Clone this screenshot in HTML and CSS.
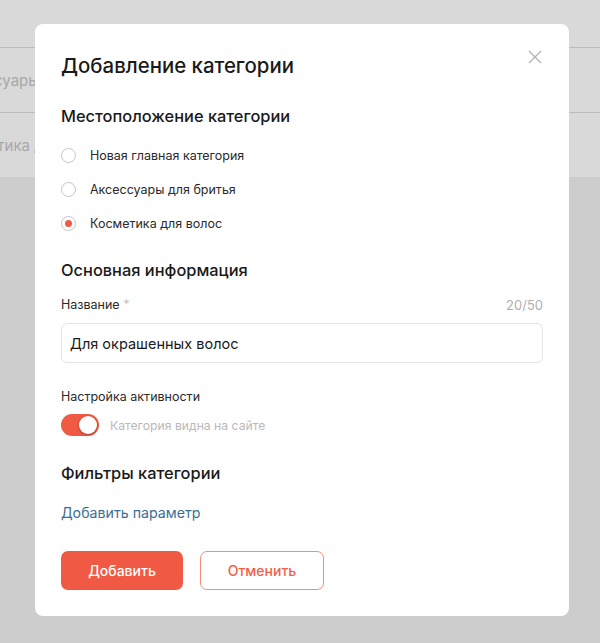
FILE: index.html
```html
<!DOCTYPE html>
<html lang="ru">
<head>
    <meta charset="UTF-8">
    <meta name="viewport" content="width=device-width, initial-scale=1.0">
    <title>Добавление категории</title>
    <link rel="stylesheet" href="styles.css">
</head>
<body>
    <!-- Page behind the modal -->
    <div class="page">
        <div class="list">
            <div class="list-row"></div>
            <div class="list-row"><span class="list-clip"><span class="list-text">Аксессуары для бритья</span></span></div>
            <div class="list-row"><span class="list-clip"><span class="list-text">Косметика для волос</span></span></div>
        </div>
    </div>

    <!-- Modal -->
    <div class="modal">
        <button class="close" aria-label="Закрыть">
            <svg width="14" height="14" viewBox="0 0 14 14">
                <path d="M1 1L13 13M13 1L1 13" stroke="#b4b4b4" stroke-width="1.4" fill="none"/>
            </svg>
        </button>

        <h1 class="modal-title">Добавление категории</h1>

        <h2 class="section-title first">Местоположение категории</h2>
        <div class="radio-group">
            <label class="radio"><span class="radio-dot"></span>Новая главная категория</label>
            <label class="radio"><span class="radio-dot"></span>Аксессуары для бритья</label>
            <label class="radio checked"><span class="radio-dot"></span>Косметика для волос</label>
        </div>

        <h2 class="section-title">Основная информация</h2>
        <div class="field-head">
            <span class="field-label">Название <span class="req">*</span></span>
            <span class="counter">20/50</span>
        </div>
        <div class="input">Для окрашенных волос</div>

        <div class="field-label activity">Настройка активности</div>
        <div class="switch-row">
            <span class="switch"><span class="knob"></span></span>
            <span class="switch-label">Категория видна на сайте</span>
        </div>

        <h2 class="section-title">Фильтры категории</h2>
        <a class="link" href="#">Добавить параметр</a>

        <div class="actions">
            <button class="btn btn-primary">Добавить</button>
            <button class="btn btn-outline">Отменить</button>
        </div>
    </div>
</body>
</html>
```

FILE: styles.css
```css
body {
    margin: 0;
    padding: 0;
    background-color: #cdcdcd;
    font-family: Inter, "Noto Sans", sans-serif;
    color: #1d1d1d;
    height: 643px;
    overflow: hidden;
}

.page {
    height: 643px;
}

.list {
    background-color: #d9d9d9;
    height: 177px;
}

.list-row {
    height: 47px;
    border-bottom: 1px solid #bcbcbc;
    display: flex;
    align-items: center;
}

.list-row + .list-row {
    height: 64px;
}

.list-row:last-child {
    border-bottom: none;
}

.list-clip {
    display: block;
    width: 35px;
    overflow: hidden;
}

.list-text {
    display: block;
    margin-left: -50px;
    white-space: nowrap;
    font-size: 15px;
    color: #a8a8a8;
}

.modal {
    position: absolute;
    top: 24px;
    left: 35px;
    width: 534px;
    height: 592px;
    box-sizing: border-box;
    padding: 28px 26px 26px;
    background-color: #fff;
    border-radius: 8px;
    display: flex;
    flex-direction: column;
}

.close {
    position: absolute;
    top: 26px;
    right: 27px;
    padding: 0;
    border: none;
    background: none;
    width: 14px;
    height: 14px;
    cursor: pointer;
}

.modal-title {
    margin: 0;
    font-size: 20.4px;
    line-height: 28px;
    font-weight: 500;
    color: #1a1a1a;
}

.section-title {
    margin: 25px 0 0;
    font-size: 16.4px;
    line-height: 24px;
    font-weight: 500;
    color: #1a1a1a;
}

.section-title.first {
    margin-top: 24px;
}

.radio-group {
    display: flex;
    flex-direction: column;
    gap: 14px;
    margin-top: 17px;
}

.radio {
    display: flex;
    align-items: center;
    gap: 14px;
    height: 20px;
    font-size: 12.5px;
    color: #2a2a2a;
}

.radio-dot {
    width: 15px;
    height: 15px;
    border: 1px solid #c4c4c4;
    border-radius: 50%;
    box-sizing: border-box;
    display: flex;
    align-items: center;
    justify-content: center;
}

.radio.checked .radio-dot::after {
    content: "";
    width: 7px;
    height: 7px;
    border-radius: 50%;
    background-color: #f05a44;
}

.field-head {
    display: flex;
    justify-content: space-between;
    margin-top: 14px;
    line-height: 18px;
}

.field-label {
    font-size: 12.5px;
    line-height: 18px;
    color: #2a2a2a;
}

.req {
    color: #c4c4c4;
}

.counter {
    font-size: 13px;
    color: #b0b0b0;
}

.input {
    margin-top: 9px;
    height: 40px;
    box-sizing: border-box;
    border: 1px solid #e4e4e4;
    border-radius: 6px;
    padding: 0 8px;
    display: flex;
    align-items: center;
    font-size: 14.5px;
    color: #1a1a1a;
}

.field-label.activity {
    margin-top: 25px;
}

.switch-row {
    display: flex;
    align-items: center;
    gap: 11px;
    margin-top: 8px;
}

.switch {
    width: 38px;
    height: 22px;
    border-radius: 11px;
    background-color: #ef5a43;
    display: flex;
    align-items: center;
    justify-content: flex-end;
    padding: 0 2px;
    box-sizing: border-box;
}

.knob {
    width: 18px;
    height: 18px;
    border-radius: 50%;
    background-color: #fff;
    box-shadow: 0 1px 3px rgba(0, 0, 0, 0.3);
}

.switch-label {
    font-size: 12.2px;
    color: #b9b9b9;
}

.link {
    margin-top: 18px;
    font-size: 14.2px;
    line-height: 20px;
    color: #3b6e93;
    text-decoration: none;
    align-self: flex-start;
}

.actions {
    display: flex;
    gap: 17px;
    margin-top: 28px;
}

.btn {
    height: 39px;
    width: 122px;
    border-radius: 7px;
    font-family: inherit;
    font-size: 14px;
    font-weight: 500;
    cursor: pointer;
}

.btn-primary {
    background-color: #f05a44;
    border: none;
    color: #fff;
}

.btn-outline {
    width: 124px;
    background-color: #fff;
    border: 1px solid #f58b7c;
    color: #f0604a;
}
```
